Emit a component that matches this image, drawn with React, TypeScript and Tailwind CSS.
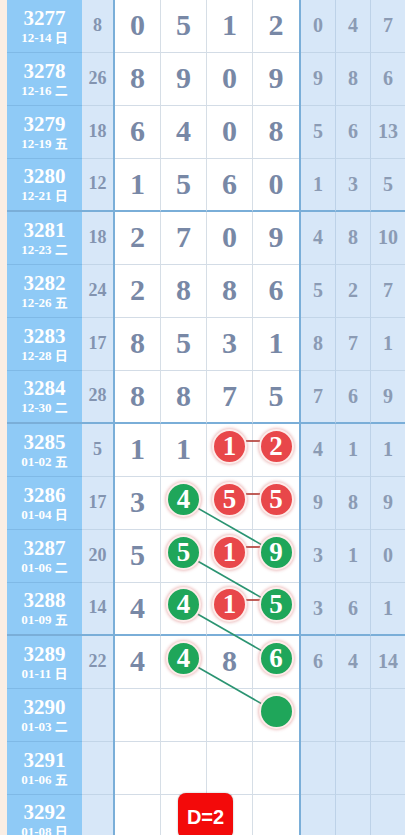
import React from 'react';
import clsx from 'clsx';

type Cell = { v: string; ball?: 'r' | 'g' };

interface Row {
  id: string;
  date: string;
  sum: string;
  main: Cell[];
  right: string[];
}

const n = (s: string): Cell[] => s.split('').map((v) => ({ v }));
const empty: Cell[] = [{ v: '' }, { v: '' }, { v: '' }, { v: '' }];

const rows: Row[] = [
  { id: '3277', date: '12-14 日', sum: '8', main: n('0512'), right: ['0', '4', '7'] },
  { id: '3278', date: '12-16 二', sum: '26', main: n('8909'), right: ['9', '8', '6'] },
  { id: '3279', date: '12-19 五', sum: '18', main: n('6408'), right: ['5', '6', '13'] },
  { id: '3280', date: '12-21 日', sum: '12', main: n('1560'), right: ['1', '3', '5'] },
  { id: '3281', date: '12-23 二', sum: '18', main: n('2709'), right: ['4', '8', '10'] },
  { id: '3282', date: '12-26 五', sum: '24', main: n('2886'), right: ['5', '2', '7'] },
  { id: '3283', date: '12-28 日', sum: '17', main: n('8531'), right: ['8', '7', '1'] },
  { id: '3284', date: '12-30 二', sum: '28', main: n('8875'), right: ['7', '6', '9'] },
  {
    id: '3285', date: '01-02 五', sum: '5',
    main: [{ v: '1' }, { v: '1' }, { v: '1', ball: 'r' }, { v: '2', ball: 'r' }],
    right: ['4', '1', '1'],
  },
  {
    id: '3286', date: '01-04 日', sum: '17',
    main: [{ v: '3' }, { v: '4', ball: 'g' }, { v: '5', ball: 'r' }, { v: '5', ball: 'r' }],
    right: ['9', '8', '9'],
  },
  {
    id: '3287', date: '01-06 二', sum: '20',
    main: [{ v: '5' }, { v: '5', ball: 'g' }, { v: '1', ball: 'r' }, { v: '9', ball: 'g' }],
    right: ['3', '1', '0'],
  },
  {
    id: '3288', date: '01-09 五', sum: '14',
    main: [{ v: '4' }, { v: '4', ball: 'g' }, { v: '1', ball: 'r' }, { v: '5', ball: 'g' }],
    right: ['3', '6', '1'],
  },
  {
    id: '3289', date: '01-11 日', sum: '22',
    main: [{ v: '4' }, { v: '4', ball: 'g' }, { v: '8' }, { v: '6', ball: 'g' }],
    right: ['6', '4', '14'],
  },
  {
    id: '3290', date: '01-03 二', sum: '',
    main: [{ v: '' }, { v: '' }, { v: '' }, { v: '', ball: 'g' }],
    right: ['', '', ''],
  },
  { id: '3291', date: '01-06 五', sum: '', main: empty, right: ['', '', ''] },
  { id: '3292', date: '01-08 日', sum: '', main: empty, right: ['', '', ''] },
];

// cell centres, used by the trend lines
const colX = [137.5, 183.5, 229.5, 276];
const rowY = (r: number) => 53 * r + 23;

const Ball: React.FC<{ v: string; c: 'r' | 'g' }> = ({ v, c }) => (
  <span
    className={clsx(
      'relative z-10 -mt-[5px] flex h-[35px] w-[35px] items-center justify-center rounded-full border-2 border-[#fdecea] text-[27px] leading-none text-white shadow-[0_0_3px_1px_rgba(214,120,120,0.45)]',
      c === 'r' ? 'bg-[#e8474a]' : 'bg-[#1fa65a]'
    )}
  >
    {v}
  </span>
);

export default function App() {
  return (
    <div className="relative h-[835px] w-[405px] overflow-hidden bg-[#faeee4] pl-[7px] font-['Liberation_Serif','Noto_Sans_CJK_SC',serif] font-bold">
      <div className="flex flex-col">
        {rows.map((row, i) => {
          const last = i % 4 === 3;
          const line = last ? 'border-b-2 border-b-[#7aaed8]' : 'border-b';
          return (
            <div key={row.id} className="flex h-[53px]">
              <div
                className={clsx(
                  'flex w-[75px] flex-col items-center justify-center bg-[#8fcaf6] text-white',
                  line,
                  !last && 'border-b-[#7fb9e6]'
                )}
              >
                <span className="text-[21px] leading-[22px]">{row.id}</span>
                <span className="mt-[1px] text-[13px] leading-[16px]">{row.date}</span>
              </div>
              <div
                className={clsx(
                  'flex w-[31px] items-center justify-center bg-[#d7e7f8] pb-[2px] text-[18px] text-[#8394b0]',
                  line,
                  !last && 'border-b-[#c2d5e8]'
                )}
              >
                {row.sum}
              </div>
              <div className="flex border-l-2 border-l-[#7aaed8] bg-white">
                {row.main.map((c, j) => (
                  <div
                    key={j}
                    className={clsx(
                      'flex h-full items-center justify-center pb-[3px] text-[30px] text-[#7888a6]',
                      j < 3 ? 'w-[46px] border-r border-r-[#d6dee6]' : 'w-[46px]',
                      line,
                      !last && 'border-b-[#d3dce6]'
                    )}
                  >
                    {c.ball ? <Ball v={c.v} c={c.ball} /> : c.v}
                  </div>
                ))}
              </div>
              <div className="flex border-l-2 border-l-[#7aaed8] bg-[#d7e7f8]">
                {row.right.map((v, j) => (
                  <div
                    key={j}
                    className={clsx(
                      'flex h-full items-center justify-center pb-[2px] text-[20px] text-[#8b9bb4]',
                      j < 2 ? 'w-[35px] border-r border-r-[#bdd2e8]' : 'w-[34px]',
                      line,
                      !last && 'border-b-[#c2d5e8]'
                    )}
                  >
                    {v}
                  </div>
                ))}
              </div>
            </div>
          );
        })}
      </div>

      {/* trend lines, under the balls */}
      <svg className="pointer-events-none absolute left-0 top-0 z-0" width={405} height={835}>
        {[9, 10, 11, 12].map((r) => (
          <line
            key={'g' + r}
            x1={colX[1]}
            y1={rowY(r)}
            x2={colX[3]}
            y2={rowY(r + 1)}
            stroke="#2b9472"
            strokeWidth={1.6}
          />
        ))}
        {[8, 9, 10, 11].map((r) => (
          <line
            key={'r' + r}
            x1={colX[2] + 16}
            y1={rowY(r) - 6}
            x2={colX[3] - 16}
            y2={rowY(r) - 6}
            stroke="#b0352f"
            strokeWidth={1.6}
          />
        ))}
      </svg>

      <div className="absolute left-[178px] top-[793px] z-20 flex h-[46px] w-[55px] items-start justify-center rounded-[8px] bg-[#f30a0a] pt-[9px] font-['Liberation_Sans',sans-serif] text-[20px] font-bold text-white shadow-[0_0_2px_rgba(0,0,0,0.3)]">
        D=2
      </div>
    </div>
  );
}
